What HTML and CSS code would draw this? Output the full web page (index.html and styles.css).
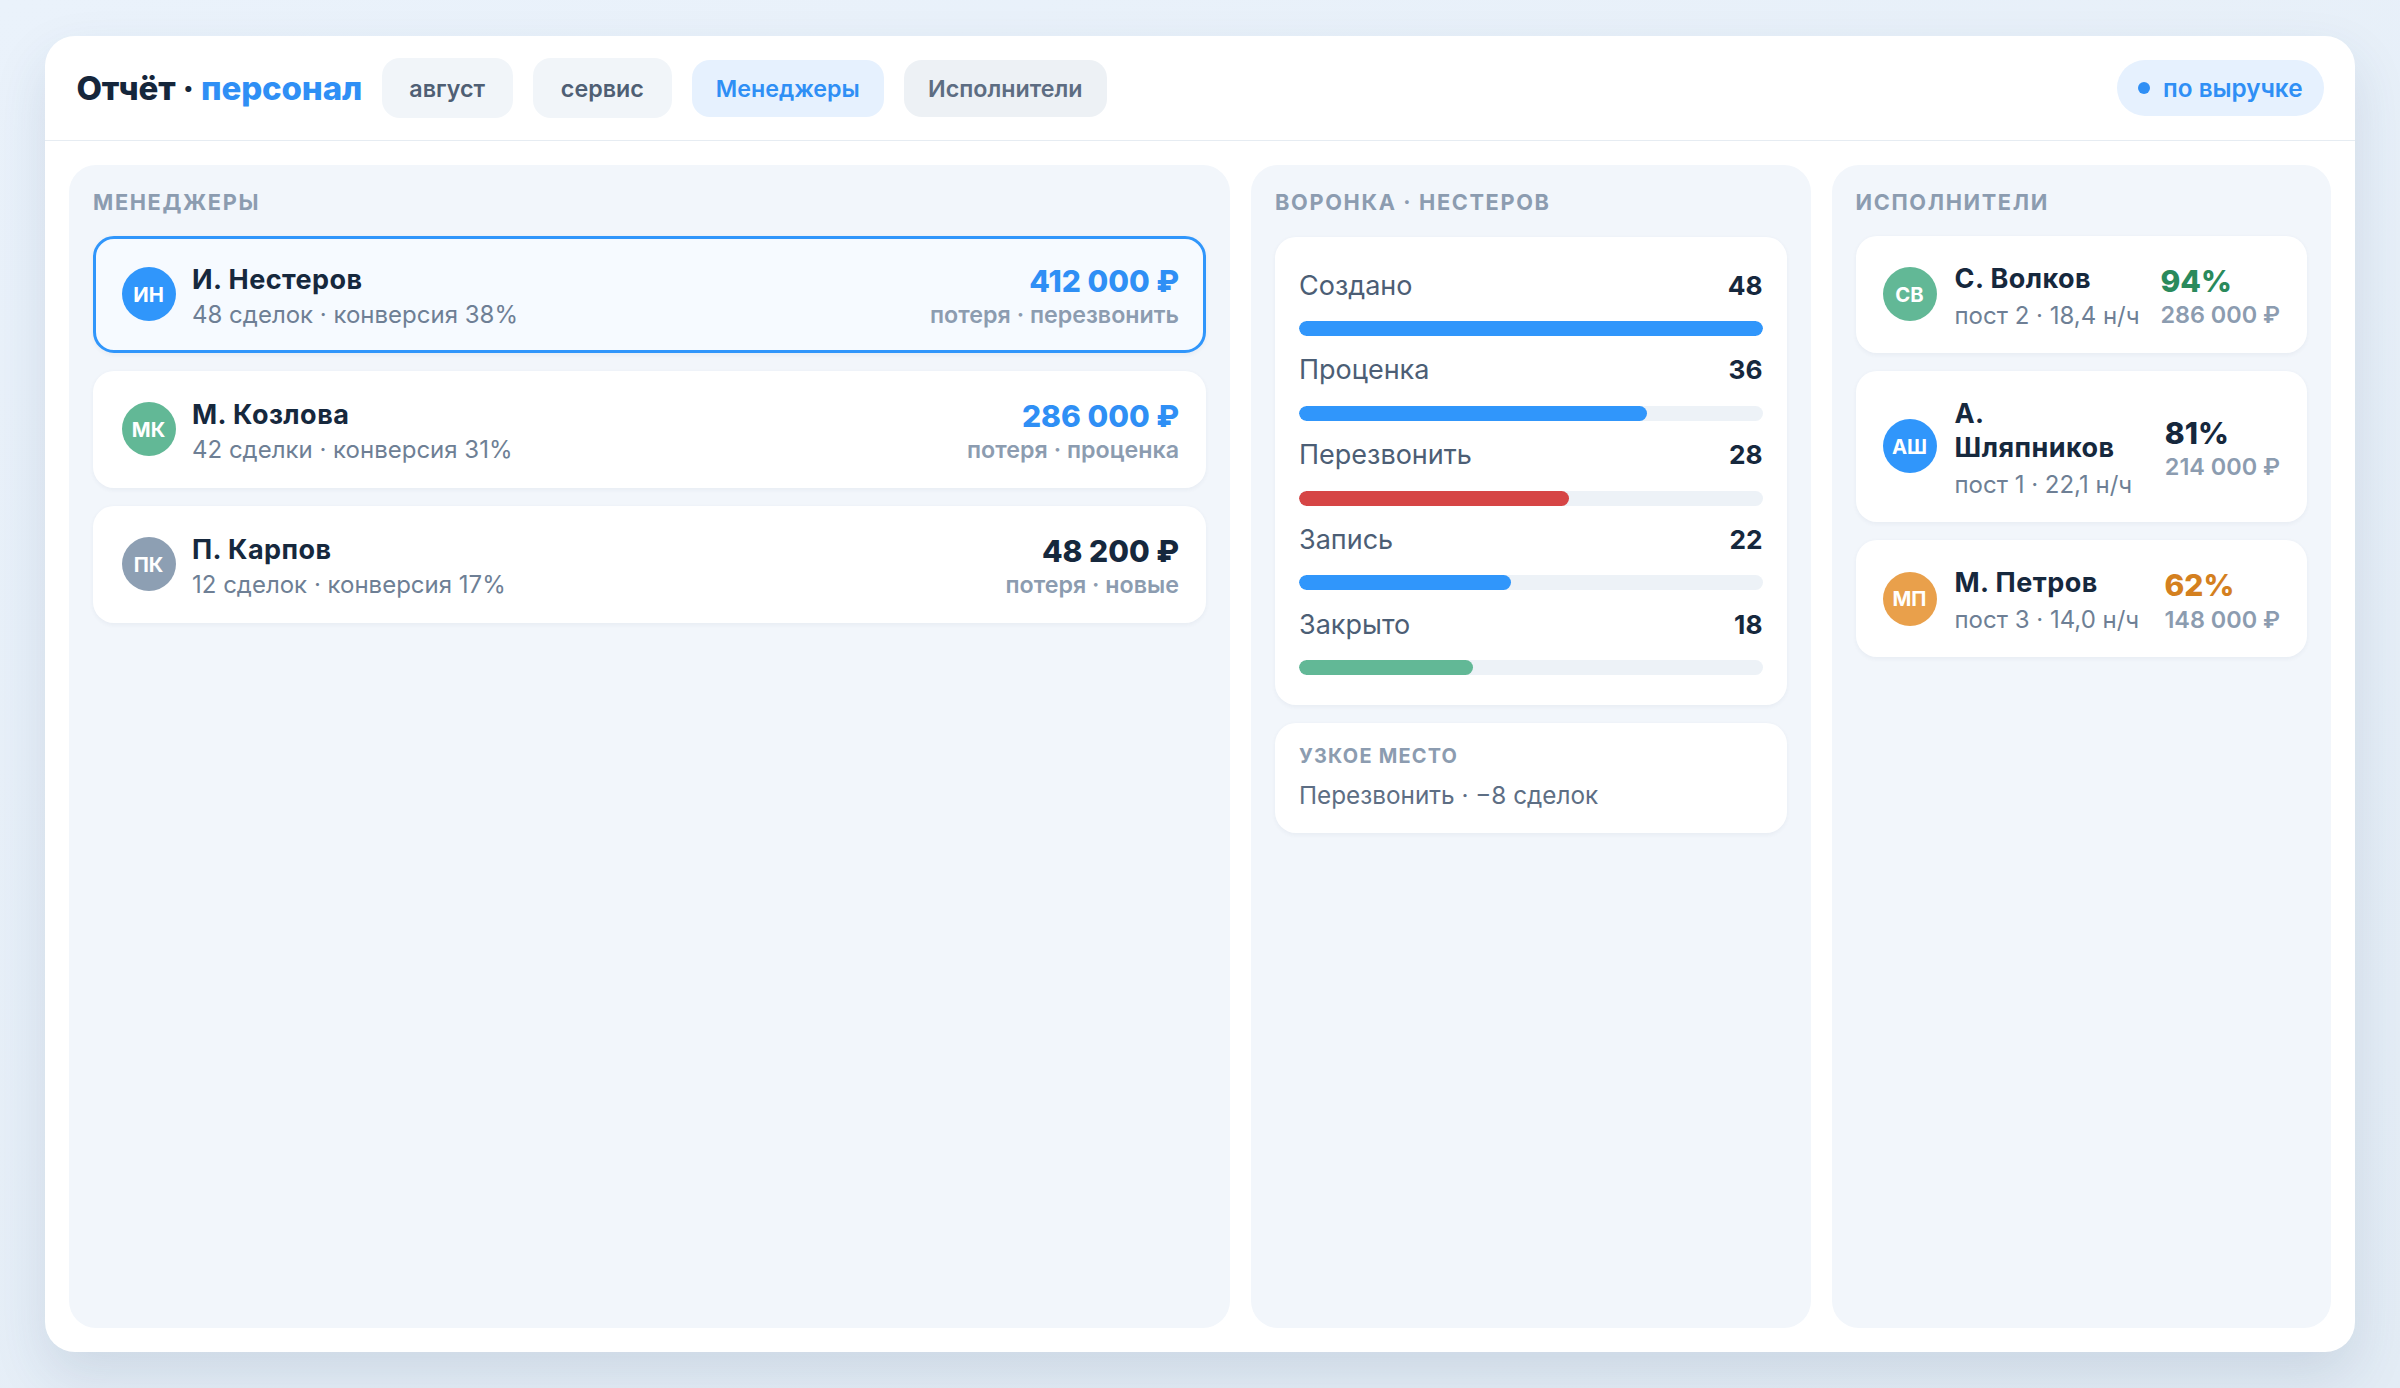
FILE: index.html
```html
<!DOCTYPE html>
<html lang="ru">
<head>
<meta charset="utf-8">
<title>Отчёт · персонал</title>
<link rel="stylesheet" href="styles.css">
</head>
<body>
<div class="card">
  <header class="topbar">
    <h1 class="title">Отчёт · <span class="accent">персонал</span></h1>
    <nav class="tabs">
      <span class="tab tab-select">август</span>
      <span class="tab tab-select">сервис</span>
      <span class="tab tab-active">Менеджеры</span>
      <span class="tab tab-muted">Исполнители</span>
    </nav>
    <div class="sort"><span class="dot"></span>по выручке</div>
  </header>

  <main class="board">
    <section class="panel">
      <h2 class="panel-title">Менеджеры</h2>
      <div class="list">
        <div class="row row-selected">
          <div class="avatar av-blue">ИН</div>
          <div class="who">
            <div class="name">И. Нестеров</div>
            <div class="meta">48 сделок · конверсия 38%</div>
          </div>
          <div class="money">
            <div class="amount">412 000 ₽</div>
            <div class="loss">потеря · перезвонить</div>
          </div>
        </div>
        <div class="row">
          <div class="avatar av-green">МК</div>
          <div class="who">
            <div class="name">М. Козлова</div>
            <div class="meta">42 сделки · конверсия 31%</div>
          </div>
          <div class="money">
            <div class="amount">286 000 ₽</div>
            <div class="loss">потеря · проценка</div>
          </div>
        </div>
        <div class="row">
          <div class="avatar av-grey">ПК</div>
          <div class="who">
            <div class="name">П. Карпов</div>
            <div class="meta">12 сделок · конверсия 17%</div>
          </div>
          <div class="money">
            <div class="amount amount-dark">48 200 ₽</div>
            <div class="loss">потеря · новые</div>
          </div>
        </div>
      </div>
    </section>

    <section class="panel">
      <h2 class="panel-title">Воронка · Нестеров</h2>
      <div class="funnel">
        <div class="stage">
          <div class="stage-head"><span>Создано</span><b>48</b></div>
          <div class="track"><div class="fill" style="width:100%"></div></div>
        </div>
        <div class="stage">
          <div class="stage-head"><span>Проценка</span><b>36</b></div>
          <div class="track"><div class="fill" style="width:75%"></div></div>
        </div>
        <div class="stage">
          <div class="stage-head"><span>Перезвонить</span><b>28</b></div>
          <div class="track"><div class="fill fill-red" style="width:58.3%"></div></div>
        </div>
        <div class="stage">
          <div class="stage-head"><span>Запись</span><b>22</b></div>
          <div class="track"><div class="fill" style="width:45.8%"></div></div>
        </div>
        <div class="stage">
          <div class="stage-head"><span>Закрыто</span><b>18</b></div>
          <div class="track"><div class="fill fill-green" style="width:37.5%"></div></div>
        </div>
      </div>
      <div class="note">
        <div class="note-title">Узкое место</div>
        <div class="note-text">Перезвонить · −8 сделок</div>
      </div>
    </section>

    <section class="panel">
      <h2 class="panel-title">Исполнители</h2>
      <div class="list">
        <div class="exec">
          <div class="avatar av-green">СВ</div>
          <div class="who">
            <div class="name">С. Волков</div>
            <div class="meta">пост 2 · 18,4 н/ч</div>
          </div>
          <div class="kpi">
            <div class="pct pct-green">94%</div>
            <div class="kpi-sum">286 000 ₽</div>
          </div>
        </div>
        <div class="exec">
          <div class="avatar av-blue">АШ</div>
          <div class="who">
            <div class="name">А. Шляпников</div>
            <div class="meta">пост 1 · 22,1 н/ч</div>
          </div>
          <div class="kpi">
            <div class="pct">81%</div>
            <div class="kpi-sum">214 000 ₽</div>
          </div>
        </div>
        <div class="exec">
          <div class="avatar av-orange">МП</div>
          <div class="who">
            <div class="name">М. Петров</div>
            <div class="meta">пост 3 · 14,0 н/ч</div>
          </div>
          <div class="kpi">
            <div class="pct pct-orange">62%</div>
            <div class="kpi-sum">148 000 ₽</div>
          </div>
        </div>
      </div>
    </section>
  </main>
</div>
</body>
</html>
```

FILE: styles.css
```css
html {
  zoom: 1.5;
  background: linear-gradient(160deg, #eaf2fb 0%, #e3ecf5 100%);
}

body {
  margin: 0;
  padding: 24px 30px;
  height: 925px;
  box-sizing: border-box;
  font-family: Inter, "Noto Sans", "Liberation Sans", sans-serif;
  color: #16283d;
}

.card {
  height: 877px;
  background: #ffffff;
  border-radius: 20px;
  box-shadow: 0 16px 36px rgba(40, 70, 110, 0.13);
  display: flex;
  flex-direction: column;
  overflow: hidden;
}

.topbar {
  height: 70px;
  box-sizing: border-box;
  padding: 0 21px;
  display: flex;
  align-items: center;
  gap: 13px;
  border-bottom: 1px solid #e6ecf2;
  flex: none;
}

.title {
  margin: 0;
  font-size: 22px;
  font-weight: 800;
  letter-spacing: -0.1px;
  color: #15263b;
  white-space: nowrap;
}

.accent {
  color: #2f8ff5;
}

.tabs {
  display: flex;
  align-items: center;
  gap: 13.5px;
}

.tab {
  height: 38px;
  padding: 0 16px;
  border-radius: 12px;
  display: flex;
  align-items: center;
  font-size: 15.5px;
  font-weight: 600;
  white-space: nowrap;
}

.tab-select {
  height: 40px;
  padding: 0 18.5px;
  background: #f1f5f9;
  color: #4f5f74;
}

.tab-active {
  background: #e6f1fe;
  color: #2f8ff5;
}

.tab-muted {
  background: #edf1f5;
  color: #5d6d82;
}

.sort {
  margin-left: auto;
  height: 37px;
  padding: 0 14px;
  border-radius: 19px;
  background: #e6f1fe;
  color: #2f8ff5;
  font-size: 16.2px;
  font-weight: 600;
  display: flex;
  align-items: center;
  gap: 9px;
}

.dot {
  width: 8px;
  height: 8px;
  border-radius: 50%;
  background: #2f8ff5;
}

.board {
  flex: 1;
  display: grid;
  grid-template-columns: minmax(0, 1fr) 373px 333px;
  gap: 14px;
  padding: 16px;
  min-height: 0;
}

.panel {
  background: #f2f6fb;
  border-radius: 18px;
  padding: 16px;
  display: flex;
  flex-direction: column;
}

.panel-title {
  margin: 0 0 14px;
  font-size: 14.5px;
  line-height: 18px;
  font-weight: 700;
  letter-spacing: 0.075em;
  text-transform: uppercase;
  color: #8c9cb0;
}

.list {
  display: flex;
  flex-direction: column;
  gap: 12px;
}

.list .row:first-child,
.list .exec:first-child {
  margin-top: -1px;
}

.row {
  height: 78px;
  box-sizing: border-box;
  background: #ffffff;
  border: 2px solid transparent;
  border-radius: 14px;
  padding: 3px 16px 0 17px;
  display: flex;
  align-items: center;
  gap: 11px;
  box-shadow: 0 1px 3px rgba(30, 60, 100, 0.05);
}

.row-selected {
  border-color: #3096fb;
  background: #f6faff;
}

.avatar {
  width: 36px;
  height: 36px;
  border-radius: 50%;
  flex: none;
  display: flex;
  align-items: center;
  justify-content: center;
  color: #ffffff;
  font-size: 13.5px;
  font-weight: 700;
}

.row .avatar {
  margin-top: -3px;
}

.av-blue { background: #3096fb; }
.av-green { background: #62b896; }
.av-grey { background: #8d9fb3; }
.av-orange { background: #e9a04b; }

.who {
  flex: 1;
  min-width: 0;
  display: flex;
  flex-direction: column;
  gap: 3px;
}

.name {
  font-size: 18px;
  line-height: 22px;
  font-weight: 700;
  letter-spacing: 0.3px;
  color: #16283d;
}

.meta {
  font-size: 16px;
  line-height: 20px;
  color: #6e7f95;
  white-space: nowrap;
}

.money {
  text-align: right;
  display: flex;
  flex-direction: column;
  gap: 1px;
}

.amount {
  font-size: 20px;
  line-height: 24px;
  font-weight: 800;
  color: #2f8ff5;
}

.amount-dark {
  color: #16283d;
}

.loss {
  font-size: 15.5px;
  line-height: 20px;
  font-weight: 600;
  color: #8c9cb0;
}

.funnel {
  background: #ffffff;
  border-radius: 14px;
  padding: 21px 16px 20px;
  display: flex;
  flex-direction: column;
  gap: 11.5px;
  box-shadow: 0 1px 3px rgba(30, 60, 100, 0.05);
}

.stage-head {
  display: flex;
  justify-content: space-between;
  font-size: 18px;
  line-height: 22px;
  color: #4c5e75;
}

.stage-head b {
  font-size: 17.5px;
  font-weight: 700;
  color: #16283d;
}

.track {
  margin-top: 13px;
  height: 10px;
  border-radius: 5px;
  background: #edf2f7;
  overflow: hidden;
}

.fill {
  height: 100%;
  border-radius: 5px;
  background: #3096fb;
}

.fill-red { background: #d64545; }
.fill-green { background: #62b896; }

.note {
  margin-top: 12px;
  background: #ffffff;
  border-radius: 14px;
  padding: 14px 16px 15px;
  display: flex;
  flex-direction: column;
  gap: 7px;
  box-shadow: 0 1px 3px rgba(30, 60, 100, 0.05);
}

.note-title {
  font-size: 13.3px;
  line-height: 17px;
  font-weight: 700;
  letter-spacing: 0.06em;
  text-transform: uppercase;
  color: #8c9cb0;
}

.note-text {
  font-size: 16.2px;
  line-height: 20px;
  color: #5d6e84;
}

.exec {
  min-height: 78px;
  box-sizing: border-box;
  background: #ffffff;
  border-radius: 14px;
  padding: 17.5px 18px 14.5px 18px;
  display: flex;
  align-items: center;
  gap: 12px;
  box-shadow: 0 1px 3px rgba(30, 60, 100, 0.05);
}

.exec .avatar {
  margin-top: -3px;
}

.exec .who {
  flex: 0 1 126px;
}

.exec .name {
  line-height: 23px;
}

.kpi {
  flex: none;
  margin-left: auto;
  display: flex;
  flex-direction: column;
  gap: 1px;
}

.pct {
  font-size: 20px;
  line-height: 24px;
  font-weight: 800;
  color: #16283d;
}

.pct-green { color: #2a8a5c; }
.pct-orange { color: #d4801f; }

.kpi-sum {
  font-size: 15.6px;
  line-height: 20px;
  font-weight: 600;
  color: #8c9cb0;
  white-space: nowrap;
}
```
